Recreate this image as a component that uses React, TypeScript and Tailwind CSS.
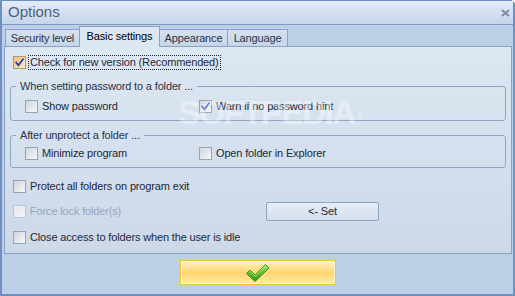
import type { ReactNode } from "react";

// Options dialog — Office 2007 blue skin, "Basic settings" tab open

function Box({ checked, disabled, focused }: { checked?: boolean; disabled?: boolean; focused?: boolean }) {
  const frame = disabled
    ? "border-[#bcc5d2] from-[#e3e8ee] to-[#f3f5f8]"
    : focused
      ? "border-[#a99a7c] from-[#f3c27a] to-[#fde9c2]"
      : "border-[#9aa3b1] from-[#cfd5de] to-[#f7f8fa]";
  return (
    <span className={`flex h-[13px] w-[13px] shrink-0 items-center justify-center border bg-gradient-to-br ${frame}`}>
      {checked && (
        <svg width="9" height="9" viewBox="0 0 9 9">
          <path d="M1.2 4.6 L3.4 7.2 L8 1.2" fill="none" stroke="#1f42b6" strokeWidth="1.8" strokeLinecap="square" />
        </svg>
      )}
    </span>
  );
}

function Option({
  label,
  checked,
  disabled,
  focused,
  className = "",
}: {
  label: string;
  checked?: boolean;
  disabled?: boolean;
  focused?: boolean;
  className?: string;
}) {
  return (
    <div className={`flex h-[15px] items-center gap-[2px] ${className}`}>
      <Box checked={checked} disabled={disabled} focused={focused} />
      <span
        className={`whitespace-nowrap px-[1px] leading-[13px] ${
          focused ? "border border-dotted border-[#1e2837]" : "border border-transparent"
        } ${disabled ? "text-[#98a4b4]" : ""}`}
      >
        {label}
      </span>
    </div>
  );
}

function Group({ title, children, className = "" }: { title: string; children: ReactNode; className?: string }) {
  return (
    <fieldset className={`rounded-[3px] border border-[#8fa5c6] px-0 pb-[6px] ${className}`}>
      <legend className="ml-[5px] px-[4px] leading-[14px] text-[#2a3446]">{title}</legend>
      {children}
    </fieldset>
  );
}

const TABS = [
  { label: "Security level", w: "w-[75px]" },
  { label: "Basic settings", w: "w-[81px]", active: true },
  { label: "Appearance", w: "w-[69px]" },
  { label: "Language", w: "w-[61px]" },
];

export default function App() {
  return (
    <div className="h-[296px] w-[515px] font-['Liberation_Sans',Arial,sans-serif] text-[11px] tracking-[-0.15px] text-[#1e2837]">
      <div className="flex h-full flex-col rounded-tr-[5px] border-x-2 border-b-2 border-t border-[#6f8ec2] bg-[#bdcfe7]">
        {/* title bar */}
        <div className="flex h-[24px] shrink-0 items-center justify-between border-b border-[#7d99c6] bg-gradient-to-b from-[#e4ecf7] to-[#c4d5ea] pl-[6px] pr-[2px]">
          <span className="text-[15px] tracking-normal text-[#4e5f7c]">Options</span>
          <svg width="9" height="8" viewBox="0 0 9 8" className="mr-[1px]">
            <path d="M1 1 L8 7 M8 1 L1 7" stroke="#7b8ba5" strokeWidth="2" />
          </svg>
        </div>

        {/* tab strip */}
        <div className="flex h-[21px] shrink-0 items-end pl-[3px]">
          {TABS.map((t, i) =>
            t.active ? (
              <div
                key={t.label}
                className={`relative z-10 -mb-px flex h-[21px] items-center justify-center border-x border-t border-[#8ba2c4] bg-[#dde7f3] pb-[2px] text-black ${t.w} ${i ? "-ml-px" : ""}`}
              >
                {t.label}
              </div>
            ) : (
              <div
                key={t.label}
                className={`flex h-[17px] items-center justify-center border-x border-t border-[#8ba2c4] bg-gradient-to-b from-[#d6e2f1] to-[#c6d5e9] text-[#2a3446] ${t.w} ${i ? "-ml-px" : ""}`}
              >
                {t.label}
              </div>
            ),
          )}
        </div>

        {/* tab page */}
        <div className="relative z-0 ml-[2px] mr-[1px] flex flex-1 flex-col border border-[#8ba2c4] bg-gradient-to-b from-[#dde7f3] to-[#ccd9e9] px-[5px] pt-[8px]">
          <Option className="pl-[3px]" label="Check for new version (Recommended)" checked focused />

          <Group title="When setting password to a folder ..." className="mt-[9px]">
            <div className="mt-[6px] flex pl-[14px]">
              <Option className="w-[174px]" label="Show password" />
              <Option label="Warn if no password hint" checked />
            </div>
          </Group>

          <Group title="After unprotect a folder ..." className="mt-[7px]">
            <div className="mt-[4px] flex pl-[14px]">
              <Option className="w-[174px]" label="Minimize program" />
              <Option label="Open folder in Explorer" />
            </div>
          </Group>

          <Option className="mt-[11px] pl-[3px]" label="Protect all folders on program exit" />

          <div className="mt-[8px] flex h-[19px] items-center pl-[3px]">
            <Option className="w-[253px]" label="Force lock folder(s)" disabled />
            <button className="flex h-[19px] w-[113px] items-center justify-center rounded-[2px] border border-[#8fa3c2] bg-gradient-to-b from-[#e6edf7] to-[#d3deec] text-[#1e2837]">
              &lt;- Set
            </button>
          </div>

          <Option className="mt-[9px] pl-[3px]" label="Close access to folders when the user is idle" />

          {/* site watermark baked into the screenshot */}
          <span className="pointer-events-none absolute left-[173px] top-[40px] select-none text-[34px] font-bold tracking-[-2px] text-white/40">
            SOFTPEDIA<sup className="ml-[2px] text-[9px] tracking-normal">®</sup>
          </span>
        </div>

        {/* footer */}
        <div className="flex h-[40px] shrink-0 justify-center pt-[6px]">
          <button className="flex h-[25px] w-[156px] items-center justify-center rounded-[2px] border border-[#efc633] bg-gradient-to-b from-[#fff2c4] via-[#ffd66e] to-[#ffeaa8] shadow-[inset_0_0_0_1px_#fff6d6]">
            <svg width="26" height="20" viewBox="0 0 26 20">
              <defs>
                <linearGradient id="ok" x1="0" y1="0" x2="0" y2="1">
                  <stop offset="0" stopColor="#a6ec6a" />
                  <stop offset="0.5" stopColor="#5cc32a" />
                  <stop offset="1" stopColor="#2f9614" />
                </linearGradient>
              </defs>
              <path
                d="M1.5 10.5 L5 7 L10 12 L20.5 1.5 L24 5 L10 18.5 Z"
                fill="url(#ok)"
                stroke="#3f8c1f"
                strokeWidth="1"
                strokeLinejoin="round"
              />
              <path d="M5 8.2 L10 13.2 L20.5 2.8" fill="none" stroke="#d8ffb8" strokeWidth="0.8" opacity="0.8" />
            </svg>
          </button>
        </div>
      </div>
    </div>
  );
}
